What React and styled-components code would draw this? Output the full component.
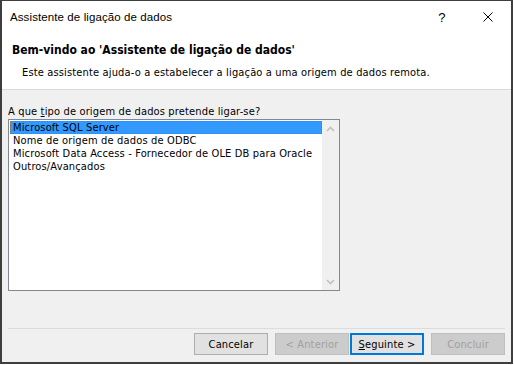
import React, { useState } from "react";
import styled, { createGlobalStyle } from "styled-components";

const GlobalStyle = createGlobalStyle`
  body {
    margin: 0;
    background: #ffffff;
  }
`;

const dialogFont = `"DejaVu Sans Condensed", "Liberation Sans", sans-serif`;

const Window = styled.div`
  width: 513px;
  height: 364px;
  box-sizing: border-box;
  border: 2px solid #3e3e3e;
  border-top-width: 1px;
  background: #f0f0f0;
  display: flex;
  flex-direction: column;
  font-family: ${dialogFont};
  font-size: 11px;
  letter-spacing: 0.15px;
  color: #000;
`;

const Header = styled.header`
  height: 89px;
  box-sizing: border-box;
  background: #ffffff;
  border-bottom: 1px solid #dadada;
  display: flex;
  flex-direction: column;
`;

const TitleBar = styled.div`
  height: 32px;
  display: flex;
  align-items: center;
`;

const Title = styled.div`
  flex: 1;
  padding-left: 8px;
  font-family: "Liberation Sans", sans-serif;
  font-size: 11.5px;
  letter-spacing: 0.1px;
`;

const TitleButton = styled.div`
  width: 46px;
  height: 100%;
  display: flex;
  align-items: center;
  justify-content: center;
  font-family: "Liberation Sans", sans-serif;
  font-size: 13px;
`;

const Heading = styled.div`
  margin: 11px 0 0 10px;
  font-weight: bold;
  font-size: 12px;
  letter-spacing: 0;
  line-height: 13px;
`;

const Subtitle = styled.div`
  margin: 9px 0 0 20px;
  line-height: 13px;
`;

const Body = styled.div`
  flex: 1;
  padding: 0 6px;
  display: flex;
  flex-direction: column;
`;

const Label = styled.div`
  margin-top: 15px;
  line-height: 13px;
`;

const ListBox = styled.div`
  margin-top: 1px;
  width: 332px;
  height: 172px;
  box-sizing: border-box;
  border: 1px solid #828790;
  background: #ffffff;
  display: flex;
`;

const Items = styled.div`
  flex: 1;
  padding: 1px 0 0 1px;
`;

const Item = styled.div`
  height: 13px;
  box-sizing: border-box;
  line-height: 11px;
  padding-left: 2px;
  white-space: nowrap;
  background: ${(p) => (p.$selected ? "#3399ff" : "transparent")};
  border: 1px ${(p) => (p.$selected ? "dotted #c66a00" : "solid transparent")};
  cursor: default;
`;

const ScrollBar = styled.div`
  width: 17px;
  background: #f0f0f0;
  display: flex;
  flex-direction: column;
  justify-content: space-between;
`;

const ScrollArrow = styled.div`
  height: 17px;
  display: flex;
  align-items: center;
  justify-content: center;
`;

const Separator = styled.div`
  margin-top: 37px;
  height: 1px;
  background: #dcdcdc;
`;

const ButtonRow = styled.div`
  margin-top: 4px;
  display: flex;
  justify-content: flex-end;
`;

const Button = styled.button`
  width: 74px;
  height: 22px;
  margin-left: ${(p) => p.$gap || 0}px;
  box-sizing: border-box;
  padding: 0;
  font-family: ${dialogFont};
  font-size: 11px;
  letter-spacing: 0.15px;
  color: ${(p) => (p.disabled ? "#a0a0a0" : "#000")};
  background: ${(p) => (p.disabled ? "#cccccc" : "#e1e1e1")};
  border: ${(p) =>
    p.$default ? "2px solid #0078d7" : p.disabled ? "1px solid #bfbfbf" : "1px solid #adadad"};
  border-radius: 0;
  outline: none;
`;

const Chevron = ({ up }) => (
  <svg width="9" height="6" viewBox="0 0 9 6">
    <path
      d={up ? "M1 5 L4.5 1.5 L8 5" : "M1 1 L4.5 4.5 L8 1"}
      fill="none"
      stroke="#c0c0c0"
      strokeWidth="1.6"
    />
  </svg>
);

const sources = [
  "Microsoft SQL Server",
  "Nome de origem de dados de ODBC",
  "Microsoft Data Access - Fornecedor de OLE DB para Oracle",
  "Outros/Avançados",
];

export default function App() {
  const [selected, setSelected] = useState(0);

  return (
    <>
      <GlobalStyle />
      <Window>
        <Header>
          <TitleBar>
            <Title>Assistente de ligação de dados</Title>
            <TitleButton>?</TitleButton>
            <TitleButton>
              <svg width="10" height="10" viewBox="0 0 10 10">
                <path d="M0.5 0.5 L9.5 9.5 M9.5 0.5 L0.5 9.5" stroke="#000" strokeWidth="1" />
              </svg>
            </TitleButton>
          </TitleBar>
          <Heading>Bem-vindo ao 'Assistente de ligação de dados'</Heading>
          <Subtitle>
            Este assistente ajuda-o a estabelecer a ligação a uma origem de dados remota.
          </Subtitle>
        </Header>
        <Body>
          <Label>
            A que <u>t</u>ipo de origem de dados pretende ligar-se?
          </Label>
          <ListBox>
            <Items>
              {sources.map((s, i) => (
                <Item key={s} $selected={i === selected} onClick={() => setSelected(i)}>
                  {s}
                </Item>
              ))}
            </Items>
            <ScrollBar>
              <ScrollArrow>
                <Chevron up />
              </ScrollArrow>
              <ScrollArrow>
                <Chevron />
              </ScrollArrow>
            </ScrollBar>
          </ListBox>
          <Separator />
          <ButtonRow>
            <Button>Cancelar</Button>
            <Button $gap={7} disabled>
              &lt; Anterior
            </Button>
            <Button $gap={1} $default>
              <u>S</u>eguinte &gt;
            </Button>
            <Button $gap={7} disabled>
              Concluir
            </Button>
          </ButtonRow>
        </Body>
      </Window>
    </>
  );
}
